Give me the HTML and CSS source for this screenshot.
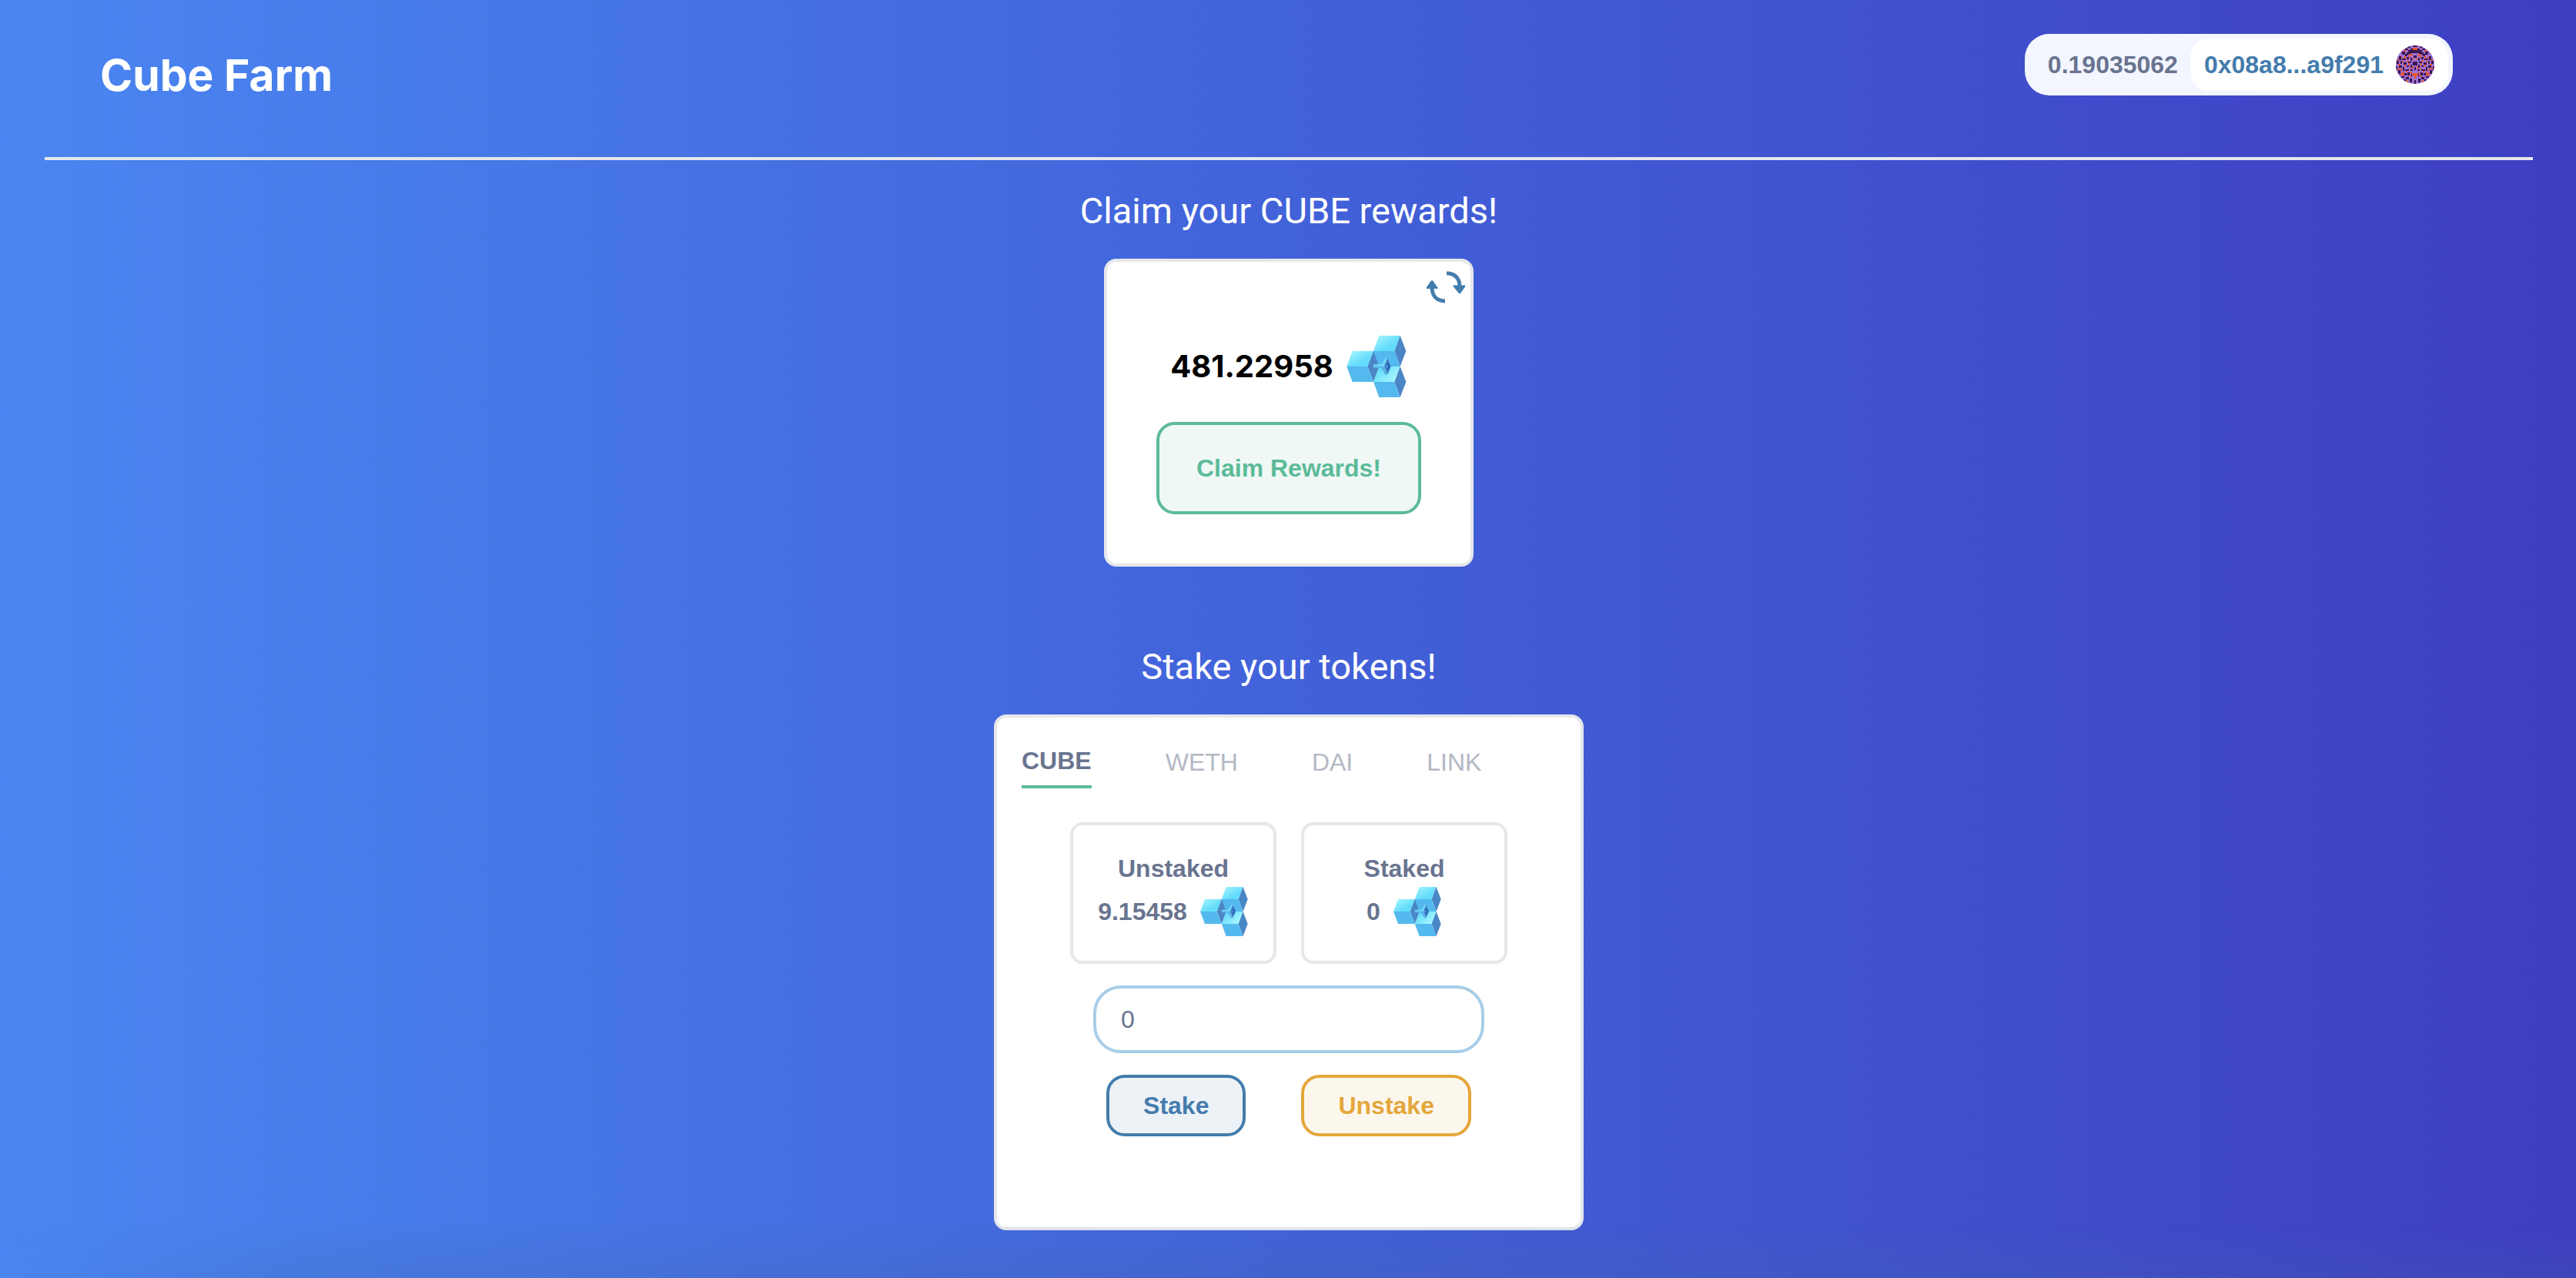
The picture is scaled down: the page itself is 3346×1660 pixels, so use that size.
FILE: index.html
```html
<!DOCTYPE html>
<html lang="en">
<head>
<meta charset="utf-8">
<meta name="viewport" content="width=device-width, initial-scale=1">
<title>Cube Farm</title>
<link rel="stylesheet" href="styles.css">
</head>
<body>
<svg class="defs" aria-hidden="true">
  <defs>
    <linearGradient id="shine" x1="0" y1="0" x2="1" y2="1"><stop offset="0.1" stop-color="#9ff3ff"/><stop offset="0.65" stop-color="#63dcfb"/></linearGradient>
    <linearGradient id="glow" x1="0" y1="0" x2="1" y2="0.6"><stop offset="0.2" stop-color="#63dcfb"/><stop offset="0.9" stop-color="#9ff3ff"/></linearGradient>
    <symbol id="cubes" viewBox="0 0 240 240">
      <path fill="url(#shine)" d="M130 0h82l-22 60h-82z"/>
      <path fill="#4a86c5" d="M212 0l23 60-23 60-22-60z"/>
      <path fill="#54b9ee" d="M108 60h82l22 60-22 10h-70l-12-10z"/>
      <path fill="url(#shine)" d="M26 60h82l-23 60H4z"/>
      <path fill="url(#glow)" d="M130 120h82l-22 60h-82z"/>
      <path fill="#4a86c5" d="M108 60l22 60-22 60-23-60z"/>
      <path fill="#54b9ee" d="M4 120h81l23 60H26z"/>
      <path fill="#4a86c5" d="M212 120l23 60-23 60-22-60z"/>
      <path fill="#54b9ee" d="M108 180h82l22 60h-82z"/>
      <path fill="#58b5e9" d="M108 119h42l12 33h-8l-16-26h-30z"/>
      <path fill="#74d9f7" d="M108 112h33l14-25h7l-12 32h-42z"/>
      <path fill="#4a86c5" d="M162 87l15 32-15 33-12-33z"/>
      <path fill="#2760b8" d="M164 99l9 20-9 21-7-21z"/>
      <path fill="#4aa7e4" d="M161 113l5 6-5 8-4-8z"/>
    </symbol>
  </defs>
</svg>
<header class="header">
  <h1 class="title">Cube Farm</h1>
  <div class="wallet">
    <span class="balance">0.19035062</span>
    <button class="account" type="button">
      <span>0x08a8...a9f291</span>
      <svg class="avatar" viewBox="0 0 50 50" aria-hidden="true">
        <defs>
          <clipPath id="round"><circle cx="25" cy="25" r="25"/></clipPath>
          <g id="half">
            <path fill="#3b1654" d="M15 1h4v2h-4zM22 0h3v2h-3zM19 4h3v3h-3zM12 4h4v2h-4zM16 6h9v4h-5v2h-6V9h2zM8 8h4v4H8zM12 11h3v3h-3zM4 14h3v5H4zM8 17h5v2H8zM14 15h3v3h-3zM23 13h2v3h-2zM19 16h2v4h-2zM1 20h3v4H1zM6 20h2v4H6zM10 22h4v3h-4zM16 21h4v2h-4zM22 21h3v5h-3zM19 25h2v4h-2zM14 26h3v2h-3zM4 26h4v3H4zM0 27h2v6H0zM9 28h2v5H9zM12 31h5v2h-5zM19 31h3v2h-3zM24 28h1v4h-1zM3 32h3v5H3zM15 35h3v4h-3zM11 36h3v3h-3zM20 36h1v5h-1zM7 40h4v2H7zM13 41h4v3h-4zM18 43h3v5h-3zM10 44h3v3h-3zM24 45h1v5h-1z"/>
            <path fill="#e8552d" d="M22 3h3v3h-3zM10 6h3v2h-3zM17 11h5v2h-3v3h-2zM11 14h2v3h-2zM22 16h2v2h-2zM7 15h2v2H7zM2 18h2v2H2zM14 19h3v2h-3zM9 20h2v2H9zM3 24h3v2H3zM16 23h2v3h-2zM21 27h2v3h-2zM11 25h2v3h-2zM6 30h2v3H6zM2 29h3v2H2zM17 29h2v2h-2zM9 34h2v5H9zM6 36h3v3H6zM13 33h2v2h-2zM18 34h2v3h-2zM21 36h4v7h-1v-2h-1v-2h-2zM17 39h2v2h-2zM14 45h2v3h-2z"/>
          </g>
        </defs>
        <g clip-path="url(#round)">
          <path fill="#9f72d2" d="M0 0h50v50H0z"/>
          <use href="#half"/>
          <use href="#half" transform="translate(50 0) scale(-1 1)"/>
        </g>
      </svg>
    </button>
  </div>
</header>
<main class="main">
  <section class="section rewards">
    <h2 class="heading">Claim your CUBE rewards!</h2>
    <div class="card claim-card">
      <button class="refresh" type="button" aria-label="Refresh rewards">
        <svg viewBox="0 0 50 42" aria-hidden="true">
          <path d="M26 3C38 3 43 11 43 20M24 39C12 39 7 31 7 21" fill="none" stroke="#447cad" stroke-width="5"/>
          <path d="M36 18.500h13a1 1 0 0 1 1 2l-5.500 8a2 2 0 0 1-3 0L35 20.500a1 1 0 0 1 1-2zM1 23h12a1 1 0 0 0 1-2L8.500 13a2 2 0 0 0-3 0L0 21a1 1 0 0 0 1 2z" fill="#447cad"/>
        </svg>
      </button>
      <p class="reward"><span>481.22958</span><svg class="cube cube-large" aria-hidden="true"><use href="#cubes"/></svg></p>
      <button class="button claim" type="button">Claim Rewards!</button>
    </div>
  </section>
  <section class="section">
    <h2 class="heading">Stake your tokens!</h2>
    <div class="card stake-card">
      <nav class="tabs">
        <a class="tab active" href="#cube">CUBE</a>
        <a class="tab" href="#weth">WETH</a>
        <a class="tab" href="#dai">DAI</a>
        <a class="tab" href="#link">LINK</a>
      </nav>
      <div class="amounts">
        <div class="amount">
          <h3 class="label">Unstaked</h3>
          <p class="value"><span>9.15458</span><svg class="cube" aria-hidden="true"><use href="#cubes"/></svg></p>
        </div>
        <div class="amount">
          <h3 class="label">Staked</h3>
          <p class="value"><span>0</span><svg class="cube" aria-hidden="true"><use href="#cubes"/></svg></p>
        </div>
      </div>
      <input class="field" type="text" inputmode="decimal" value="0" aria-label="Amount">
      <div class="actions">
        <button class="button stake" type="button">Stake</button>
        <button class="button unstake" type="button">Unstake</button>
      </div>
    </div>
  </section>
</main>
</body>
</html>
```
FILE: styles.css
```css
* { box-sizing: border-box; }

body {
  position: relative;
  min-height: 100vh;
  margin: 0;
  padding: 0 56px 0 58px;
  background: linear-gradient(90deg, #4a86f1 0%, #4262d9 50%, #3e3ec2 100%);
  font: 32px/48px "Liberation Sans", Arial, sans-serif;
  color: #69748f;
}

body::after {
  content: "";
  position: absolute;
  left: 0;
  right: 0;
  bottom: 0;
  height: 72px;
  background: linear-gradient(90deg, transparent 0, #44669933 400px);
  -webkit-mask-image: linear-gradient(#0000, #000);
  mask-image: linear-gradient(#0000, #000);
  pointer-events: none;
}

h1, h2, h3, p { margin: 0; }
button, input { font: inherit; }
button { cursor: pointer; }
.defs { position: absolute; width: 0; height: 0; }

.header {
  display: flex;
  justify-content: space-between;
  align-items: flex-start;
  height: 208px;
  padding: 44px 104px 0 72px;
  border-bottom: 4px solid #e5e7eb;
}

.title {
  padding-top: 18px;
  font: bold 57px/72px Inter, sans-serif;
  color: #fff;
}

.wallet {
  display: flex;
  align-items: center;
  height: 80px;
  padding: 6px;
  border-radius: 32px;
  background: #f3f6ff;
  font-weight: bold;
}

.balance { padding: 0 16px 0 24px; }

.account {
  display: flex;
  align-items: center;
  gap: 16px;
  height: 68px;
  padding: 0 18px;
  border: 0;
  border-radius: 24px;
  background: #fff;
  color: #447cad;
}

.avatar { width: 50px; height: 50px; }

.main, .section {
  display: flex;
  flex-direction: column;
  align-items: center;
}

.main { gap: 96px; padding: 32px 0 62px; }
.section { gap: 32px; }

.heading {
  padding-top: 4px;
  font: 47px/60px Roboto, sans-serif;
  color: #fff;
}

.card {
  position: relative;
  display: flex;
  flex-direction: column;
  align-items: center;
  border: 4px solid #e5e7eb;
  border-radius: 16px;
  background: #fff;
}

.claim-card {
  width: 480px;
  padding: 96px 0 64px;
  gap: 32px;
}

.refresh {
  position: absolute;
  top: 12px;
  right: 7px;
  display: flex;
  padding: 0;
  border: 0;
  background: none;
}

.refresh svg { width: 50px; height: 42px; }

.reward {
  display: flex;
  align-items: center;
  gap: 16px;
  font: bold 40px/48px Inter, sans-serif;
  color: #000;
}

.cube { width: 64px; height: 64px; }
.cube-large { width: 80px; height: 80px; }

.button {
  height: 80px;
  padding: 0 44px;
  border: 4px solid;
  border-radius: 24px;
  font-weight: bold;
}

.claim {
  height: 120px;
  padding: 0 48px;
  background: #eff8f5;
  color: #5bbb98;
}

.stake { background: #edf2f7; color: #447cad; }
.unstake { background: #fcf7ec; color: #e4a63b; }

.stake-card { width: 766px; padding: 24px 32px 118px; }

.tabs {
  display: flex;
  align-items: center;
  align-self: stretch;
  gap: 96px;
}

.tab { color: #b3b8c4; text-decoration: none; }

.active {
  padding: 8px 0;
  border-bottom: 4px solid #5bbb98;
  font-weight: bold;
  color: #69748f;
}

.amounts {
  display: flex;
  gap: 32px;
  margin: 44px 0 28px;
}

.amount {
  display: flex;
  flex-direction: column;
  align-items: center;
  width: 268px;
  padding: 32px 0;
  border: 4px solid #e5e7eb;
  border-radius: 16px;
}

.label { font-size: 32px; line-height: 48px; }

.value {
  display: flex;
  align-items: center;
  gap: 16px;
  font-weight: bold;
}

.field {
  width: 508px;
  height: 88px;
  padding: 0 32px;
  border: 4px solid #a8cde8;
  border-radius: 36px;
  background: #fff;
  color: #69748f;
}

.actions {
  display: flex;
  gap: 72px;
  margin-top: 28px;
}
```
